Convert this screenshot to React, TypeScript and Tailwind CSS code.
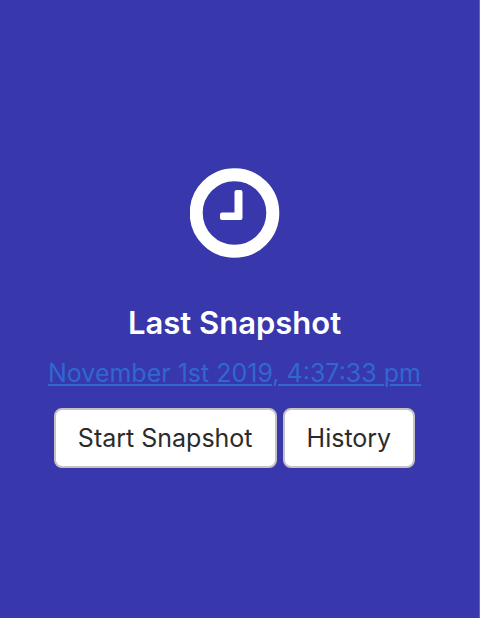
import React from "react";

function ClockIcon() {
  return (
    <svg viewBox="0 0 90 90" className="h-[90px] w-[90px]" aria-hidden="true">
      <circle cx="44.500" cy="45" r="38.3" fill="none" stroke="#fff" strokeWidth="13" />
      <path
        d="M46.5 22h4a2 2 0 0 1 2 2v26a2 2 0 0 1-2 2H32a2 2 0 0 1-2-2v-3.500a2 2 0 0 1 2-2h12.500V24a2 2 0 0 1 2-2z"
        fill="#fff"
      />
    </svg>
  );
}

function ActionButton({ children }: { children: React.ReactNode }) {
  return (
    <button
      type="button"
      className="h-[60px] rounded-lg border-2 border-[#c3c3c3] bg-white px-[22px] text-[25px] leading-8 whitespace-nowrap text-[#2b2b2b]"
    >
      {children}
    </button>
  );
}

export default function App() {
  return (
    <div className="flex min-h-screen bg-white pr-[14px] pb-1 font-['Inter','Liberation_Sans',sans-serif]">
      <main className="flex flex-1 flex-col items-center justify-center border-r border-[#6361bd] bg-[#3837ac] pt-[18px] pr-[10px]">
        <ClockIcon />
        <h1 className="mt-[45px] text-[31px] leading-10 font-semibold text-white">Last Snapshot</h1>
        <a
          href="#latest"
          className="mt-[14px] text-[25px] leading-8 whitespace-nowrap text-[#3068d0] underline decoration-2 underline-offset-2"
        >
          November 1st 2019, 4:37:33 pm
        </a>
        <div className="mt-[19px] flex gap-[6px]">
          <ActionButton>Start Snapshot</ActionButton>
          <ActionButton>History</ActionButton>
        </div>
      </main>
    </div>
  );
}
